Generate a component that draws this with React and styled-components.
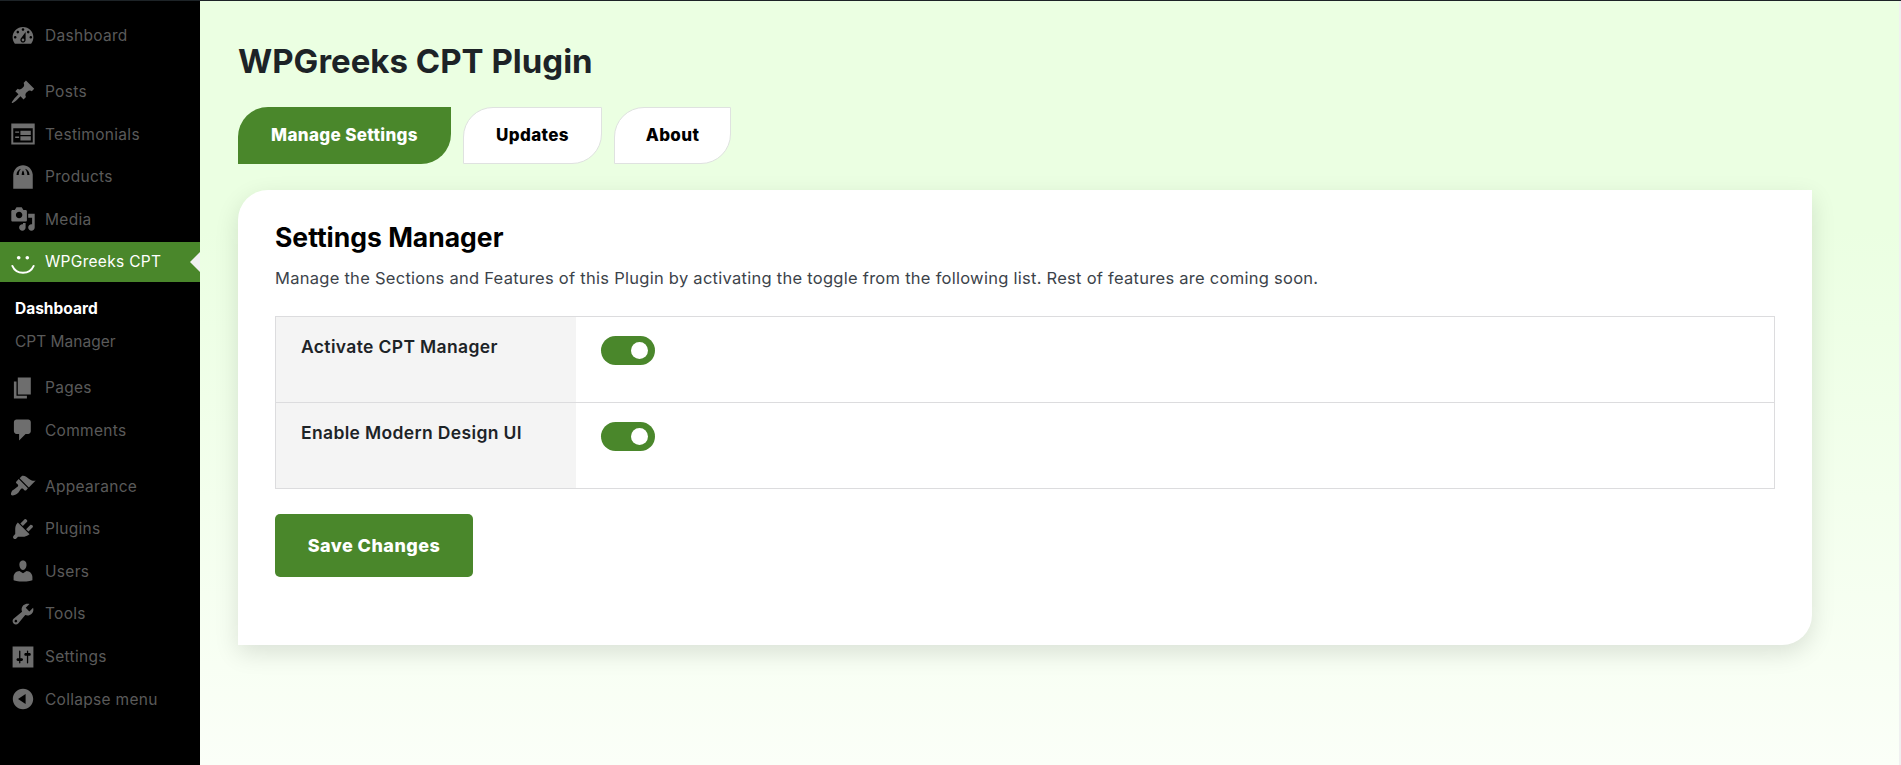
import React from 'react';
import styled, { createGlobalStyle } from 'styled-components';

const GREEN = '#4a872b';

const Global = createGlobalStyle`
  html, body { margin: 0; padding: 0; height: 100%; overflow: hidden; }
  body { font-family: "Inter", "Liberation Sans", sans-serif; background: #f0f0f1; }
  #root { height: 100%; }
`;

const Shell = styled.div`
  display: flex;
  height: 765px;
  width: 1901px;
  border-top: 1px solid #1d2327;
  box-sizing: border-box;
`;

const Sidebar = styled.nav`
  width: 200px;
  flex: none;
  background: #000;
  padding-top: 12px;
  box-sizing: border-box;
  font-family: "Inter", sans-serif;
`;

const Row = styled.div`
  position: relative;
  display: flex;
  align-items: center;
  height: 40px;
  margin-top: ${p => (p.$gap ? '16px' : '2.6px')};
  padding-left: 10px;
  background: ${p => (p.$active ? GREEN : 'transparent')};
  color: ${p => (p.$active ? '#fff' : '#5a5a5a')};
  font-size: 15.5px;
  letter-spacing: 0.3px;
`;

const IconBox = styled.span`
  width: 26px;
  height: 26px;
  margin-right: 9px;
  display: flex;
  color: ${p => (p.$active ? '#fff' : '#6e6e6e')};
  svg { width: 26px; height: 26px; fill: currentColor; }
`;

const Notch = styled.span`
  position: absolute;
  right: 0;
  top: 50%;
  margin-top: -10px;
  border: 10px solid transparent;
  border-right-color: #f0f0f1;
  border-left-width: 0;
`;

const SubMenu = styled.div`
  padding: 10px 0 7px 15px;
`;

const SubItem = styled.div`
  height: 33px;
  line-height: 33px;
  font-size: 15.5px;
  font-weight: ${p => (p.$on ? 700 : 400)};
  color: ${p => (p.$on ? '#fff' : '#5a5a5a')};
`;

const Main = styled.main`
  flex: 1;
  min-width: 0;
  padding: 0 87px 0 38px;
  background: linear-gradient(180deg, #ebffe2 0%, #ebffe2 30%, #fbfff8 100%);
  border-right: 2px solid #f0f0f1;
`;

const Title = styled.h1`
  margin: 38px 0 24px;
  font-size: 33px;
  line-height: 44px;
  font-weight: 700;
  color: #1d2327;
`;

const Tabs = styled.div`
  display: flex;
  gap: 12px;
  margin-bottom: 26px;
`;

const Tab = styled.div`
  height: 57px;
  box-sizing: border-box;
  width: ${p => p.$w}px;
  padding-bottom: 2px;
  display: flex;
  align-items: center;
  justify-content: center;
  font-size: 17px;
  letter-spacing: 0.35px;
  font-weight: 800;
  border-radius: 30px 0 30px 0;
  background: ${p => (p.$active ? GREEN : '#fff')};
  color: ${p => (p.$active ? '#fff' : '#000')};
  border: ${p => (p.$active ? 'none' : '1px solid #dfe2e0')};
`;

const Card = styled.section`
  height: 455px;
  box-sizing: border-box;
  background: #fff;
  border-radius: 30px 0 30px 0;
  padding: 28px 37px;
  box-shadow: 0 8px 25px rgba(0, 0, 0, 0.12);
`;

const CardTitle = styled.h2`
  margin: 0 0 10px;
  font-size: 26.5px;
  line-height: 38px;
  font-weight: 700;
  color: #000;
`;

const Desc = styled.p`
  margin: 0 0 25.5px;
  font-size: 16.5px;
  letter-spacing: 0.27px;
  line-height: 24px;
  color: #3c434a;
`;

const Table = styled.div`
  border: 1px solid #dcdcde;
  width: 1500px;
  box-sizing: border-box;
`;

const TableRow = styled.div`
  display: flex;
  height: 85px;
  & + & { border-top: 1px solid #dcdcde; }
`;

const Label = styled.div`
  width: 300px;
  box-sizing: border-box;
  padding: 18px 25px;
  background: #f4f4f4;
  font-size: 17.5px;
  letter-spacing: 0.35px;
  line-height: 24px;
  font-weight: 600;
  color: #1d2327;
`;

const Cell = styled.div`
  padding: 19px 25px;
`;

const Toggle = styled.span`
  display: block;
  position: relative;
  width: 54px;
  height: 29px;
  border-radius: 15px;
  background: ${GREEN};
  &::after {
    content: '';
    position: absolute;
    right: 7px;
    top: 6px;
    width: 17px;
    height: 17px;
    border-radius: 50%;
    background: #fff;
  }
`;

const SaveButton = styled.button`
  display: block;
  margin-top: 25px;
  width: 198px;
  height: 63px;
  border: 0;
  border-radius: 5px;
  background: ${GREEN};
  color: #fff;
  font-family: inherit;
  font-size: 18px;
  letter-spacing: 0.45px;
  font-weight: 800;
`;

const Path = ({ d }) => (
  <svg viewBox="0 0 20 20"><path fillRule="evenodd" d={d} /></svg>
);

const icons = {
  dashboard: <Path d="M3.76 16h12.48c1.1-1.37 1.76-3.11 1.76-5 0-4.42-3.58-8-8-8s-8 3.58-8 8c0 1.89.66 3.63 1.76 5zM10 4c.55 0 1 .45 1 1s-.45 1-1 1-1-.45-1-1 .45-1 1-1zM6 6c.55 0 1 .45 1 1s-.45 1-1 1-1-.45-1-1 .45-1 1-1zm8 0c.55 0 1 .45 1 1s-.45 1-1 1-1-.45-1-1 .45-1 1-1zm-5.37 5.55L12 7v6c0 1.1-.9 2-2 2s-2-.9-2-2c0-.57.24-1.08.63-1.45zM4 10c.55 0 1 .45 1 1s-.45 1-1 1-1-.45-1-1 .45-1 1-1zm12 0c.55 0 1 .45 1 1s-.45 1-1 1-1-.45-1-1 .45-1 1-1zm-5 3c0-.55-.45-1-1-1s-1 .45-1 1 .45 1 1 1 1-.45 1-1z" />,
  posts: <Path d="M10.44 3.02l1.82-1.82 6.36 6.35-1.83 1.82c-1.05-.68-2.48-.57-3.41.36l-.75.75c-.92.93-1.04 2.35-.35 3.41l-1.83 1.82-2.41-2.41-2.8 2.79c-.42.42-3.38 2.71-3.8 2.29s1.86-3.39 2.28-3.81l2.79-2.79L4.1 9.36l1.83-1.82c1.05.69 2.48.57 3.4-.36l.75-.75c.93-.92 1.05-2.35.36-3.41z" />,
  testimonials: <Path d="M1 2h18v16H1zM2.500 5.500v11h15v-11zM4 8h3v1H4zM4 12h3v1H4zM8 7.500h8v3.300H8zM8 11.800h8v3.200H8z" />,
  products: <Path d="M2.500 8C3 4 6 1 10 1s7 3 7.500 7v11h-15zM5 8.500h1.700c0-2 .6-3.700 1.800-4.800C6.500 4.200 5 6 5 8.500zM15 8.500h-1.700c0-2-.6-3.700-1.800-4.800 2 .5 3.500 2.300 3.500 4.800zM9 8.500h2c0-1.500-.4-2.800-1-3.500-.6.700-1 2-1 3.500z" />,
  media: <Path d="M13 11V4c0-.55-.45-1-1-1h-1.670L9 1H5L3.670 3H2c-.55 0-1 .45-1 1v7c0 .55.45 1 1 1h10c.55 0 1-.45 1-1zM7 4.500c1.380 0 2.500 1.120 2.500 2.500S8.380 9.500 7 9.500 4.500 8.380 4.500 7 5.620 4.500 7 4.500zM14 6h5v10.500c0 1.380-1.120 2.500-2.500 2.500S14 17.880 14 16.500s1.120-2.500 2.500-2.500c.17 0 .34.02.5.05V9h-3V6zm-4 8.050V13h2v3.500c0 1.380-1.120 2.500-2.500 2.500S7 17.880 7 16.500 8.120 14 9.500 14c.17 0 .34.02.5.05z" />,
  smile: (
    <svg viewBox="0 0 20 20">
      <circle cx="6.700" cy="6.700" r="1.400" />
      <circle cx="13.300" cy="6.700" r="1.400" />
      <path d="M1.800 13c1.500 3.500 4.500 5.300 8.200 5.300s6.700-1.800 8.200-5.300" fill="none" stroke="currentColor" strokeWidth="1.500" strokeLinecap="round" />
    </svg>
  ),
  pages: <Path d="M6 15V2h10v13H6zm-1 1h8v2H3V5h2v11z" />,
  comments: <Path d="M5 2h9c1.100 0 2 .9 2 2v7c0 1.100-.9 2-2 2h-2l-5 5v-5H5c-1.100 0-2-.9-2-2V4c0-1.100.9-2 2-2z" />,
  appearance: <Path d="M14.480 11.060L7.410 3.990l1.500-1.500c.5-.56 2.300-.47 3.510.32 1.210.8 1.430 1.280 2.910 2.100 1.180.64 2.450 1.260 4.450.85zm-.71.71L6.700 4.700 4.930 6.470c-.39.39-.39 1.020 0 1.410l1.060 1.060c.39.39.39 1.030 0 1.420-.6.6-1.430 1.110-2.210 1.690-.35.26-.7.53-1.010.84C1.430 13.230.28 16.020 1 17s3.760-.35 5.090-1.640c.31-.31.58-.66.84-1.010.58-.78 1.100-1.600 1.690-2.210.39-.39 1.020-.39 1.410 0l1.060 1.060c.39.39 1.020.39 1.410 0z" />,
  plugins: <Path d="M13.110 4.360L9.870 7.600 8 5.730l3.240-3.240c.35-.34 1.050-.2 1.560.32.52.51.66 1.210.31 1.550zm-8 1.770l.91-1.120 9.010 9.010-1.190.84c-.71.71-2.630 1.160-3.820 1.160H6.140L4.900 17.260c-.59.59-1.540.59-2.120 0-.59-.58-.59-1.530 0-2.120l1.240-1.240v-3.880c0-1.130.4-3.190 1.090-3.890zm7.260 3.970l3.240-3.240c.34-.35 1.040-.21 1.550.31.52.51.66 1.210.31 1.550l-3.240 3.250z" />,
  users: <Path d="M10 9.250c-2.270 0-2.730-3.440-2.730-3.440C7 4.020 7.820 2 9.970 2c2.160 0 2.980 2.020 2.710 3.810 0 0-.41 3.440-2.680 3.440zm0 2.570L12.720 10c2.390 0 4.520 2.330 4.520 4.530v2.490s-3.650 1.130-7.240 1.130c-3.650 0-7.240-1.130-7.240-1.130v-2.490c0-2.250 1.940-4.480 4.470-4.480z" />,
  tools: <Path d="M16.680 9.770c-1.340 1.340-3.300 1.670-4.950.99l-5.410 6.520c-.99.99-2.590.99-3.580 0s-.99-2.590 0-3.570l6.520-5.420c-.68-1.650-.35-3.610.99-4.950 1.280-1.280 3.120-1.620 4.720-1.060l-2.890 2.890 2.820 2.820 2.860-2.870c.53 1.580.18 3.390-1.080 4.650zM3.810 16.210c.4.39 1.040.39 1.430 0 .4-.4.4-1.040 0-1.430-.39-.4-1.030-.4-1.430 0-.39.39-.39 1.030 0 1.430z" />,
  settings: <Path d="M2 2h16v16H2zM8 11h1c.55 0 1 .45 1 1s-.45 1-1 1H8v1.500c0 .28-.22.5-.5.5s-.5-.22-.5-.5V13H6c-.55 0-1-.45-1-1s.45-1 1-1h1V5.500c0-.28.22-.5.5-.5s.5.22.5.5V11zm5-2h-1c-.55 0-1-.45-1-1s.45-1 1-1h1V5.500c0-.28.22-.5.5-.5s.5.22.5.5V7h1c.55 0 1 .45 1 1s-.45 1-1 1h-1v5.500c0 .28-.22.5-.5.5s-.5-.22-.5-.5V9z" />,
  collapse: <Path d="M10 2.160c4.330 0 7.840 3.510 7.840 7.840s-3.510 7.840-7.840 7.840S2.160 14.330 2.160 10 5.710 2.160 10 2.160zm2 11.720V6.120L6.180 9.970z" />,
};

const TopItems = [
  { icon: 'posts', label: 'Posts', gap: true },
  { icon: 'testimonials', label: 'Testimonials' },
  { icon: 'products', label: 'Products' },
  { icon: 'media', label: 'Media' },
];

const MiddleItems = [
  { icon: 'pages', label: 'Pages' },
  { icon: 'comments', label: 'Comments' },
];

const LowerItems = [
  { icon: 'appearance', label: 'Appearance', gap: true },
  { icon: 'plugins', label: 'Plugins' },
  { icon: 'users', label: 'Users' },
  { icon: 'tools', label: 'Tools' },
  { icon: 'settings', label: 'Settings' },
  { icon: 'collapse', label: 'Collapse menu' },
];

const MenuRow = ({ item }) => (
  <Row $gap={item.gap}>
    <IconBox>{icons[item.icon]}</IconBox>
    {item.label}
  </Row>
);

export default function App() {
  return (
    <>
      <Global />
      <Shell>
        <Sidebar>
          <Row><IconBox>{icons.dashboard}</IconBox>Dashboard</Row>
          {TopItems.map(i => <MenuRow key={i.label} item={i} />)}
          <Row $active>
            <IconBox $active>{icons.smile}</IconBox>
            WPGreeks CPT
            <Notch />
          </Row>
          <SubMenu>
            <SubItem $on>Dashboard</SubItem>
            <SubItem>CPT Manager</SubItem>
          </SubMenu>
          {MiddleItems.map(i => <MenuRow key={i.label} item={i} />)}
          {LowerItems.map(i => <MenuRow key={i.label} item={i} />)}
        </Sidebar>
        <Main>
          <Title>WPGreeks CPT Plugin</Title>
          <Tabs>
            <Tab $active $w={213}>Manage Settings</Tab>
            <Tab $w={139}>Updates</Tab>
            <Tab $w={117}>About</Tab>
          </Tabs>
          <Card>
            <CardTitle>Settings Manager</CardTitle>
            <Desc>Manage the Sections and Features of this Plugin by activating the toggle from the following list. Rest of features are coming soon.</Desc>
            <Table>
              <TableRow>
                <Label>Activate CPT Manager</Label>
                <Cell><Toggle /></Cell>
              </TableRow>
              <TableRow>
                <Label>Enable Modern Design UI</Label>
                <Cell><Toggle /></Cell>
              </TableRow>
            </Table>
            <SaveButton>Save Changes</SaveButton>
          </Card>
        </Main>
      </Shell>
    </>
  );
}
